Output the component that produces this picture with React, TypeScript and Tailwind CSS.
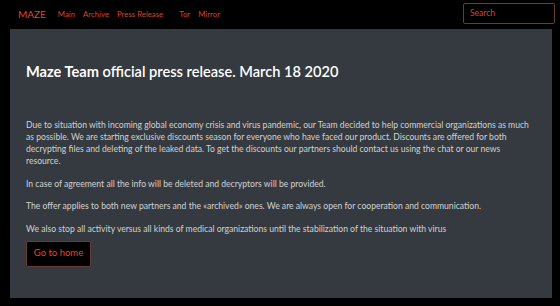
export default function App() {
  return (
    <div className="min-h-[306px] w-[560px] bg-black font-['Lato',sans-serif]">
      <nav className="flex h-[29px] items-center pl-[18px] pr-[5px]">
        <span className="text-[10px] text-[#e0462d] mr-[12px]">MAZE</span>
        <div className="flex items-center gap-[8px] text-[7.8px] text-[#d8432c]">
          <span>Main</span>
          <span>Archive</span>
          <span>Press Release</span>
          <span className="ml-[8px]">Tor</span>
          <span>Mirror</span>
        </div>
        <div className="ml-auto mb-[2px] flex h-[21px] w-[92px] items-center rounded-[2px] border border-[#6a3a36] px-[6px] text-[8.5px] text-[#d8432c]">
          Search
        </div>
      </nav>
      <main className="ml-[10px] w-[542px] h-[269px] bg-[#343a40] px-[16px] pt-[33px] text-[#d2d2d2]">
        <h1 className="text-[14.6px] leading-[20px] text-white font-semibold">
          <span className="font-bold">Maze Team</span> official press release. March 18 2020
        </h1>
        <div className="mt-[37px] text-[8.6px] leading-[12px]">
          <p>
            Due to situation with incoming global economy crisis and virus pandemic, our Team decided to help commercial organizations as much as possible. We are starting exclusive discounts season for everyone who have faced our product. Discounts are offered for both decrypting files and deleting of the leaked data. To get the discounts our partners should contact us using the chat or our news resource.
          </p>
          <p className="mt-[10.5px]">In case of agreement all the info will be deleted and decryptors will be provided.</p>
          <p className="mt-[10.5px]">The offer applies to both new partners and the «archived» ones. We are always open for cooperation and communication.</p>
          <p className="mt-[10.5px]">We also stop all activity versus all kinds of medical organizations until the stabilization of the situation with virus</p>
        </div>
        <button className="mt-[6px] h-[26px] w-[65px] rounded-[2px] border border-[#6a3a36] bg-black text-[9.5px] text-[#e0462d]">
          Go to home
        </button>
      </main>
    </div>
  );
}
